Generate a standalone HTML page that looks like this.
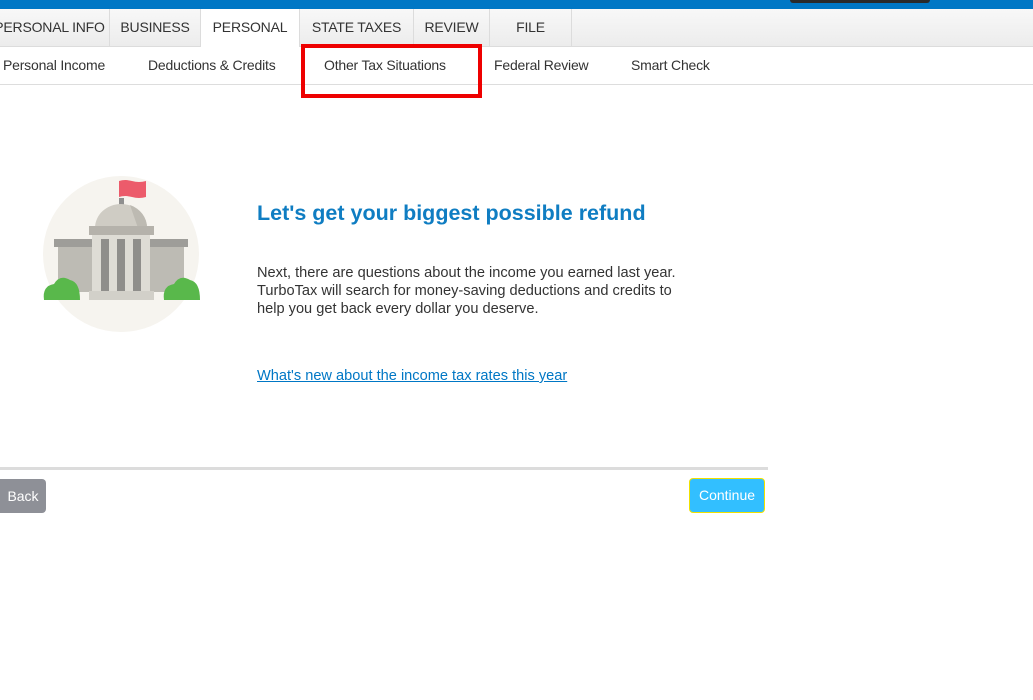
<!DOCTYPE html>
<html><head><style>
body{margin:0;width:1033px;height:700px;background:#fff;font-family:"Liberation Sans",sans-serif;position:relative;overflow:hidden}
.top{position:absolute;left:0;top:0;width:1033px;height:9px;background:#0077c5}
.dark{position:absolute;left:790px;top:0;width:140px;height:3px;background:#2a2a2a;border-radius:0 0 3px 3px}
.tabs{position:absolute;left:0;top:9px;width:1033px;height:37px;background:linear-gradient(#f8f8f8,#ececec);border-bottom:1px solid #dcdcdc}
.tab{position:absolute;top:0;height:37px;line-height:36px;font-size:14px;color:#333;text-align:center;border-right:1px solid #dcdcdc;box-sizing:border-box;letter-spacing:-0.2px}
.tab.act{background:#fff;height:38px}
.sub{position:absolute;top:46px;left:0;width:1033px;height:38px;border-bottom:1px solid #ddd}
.s{position:absolute;top:11px;font-size:14px;color:#333;letter-spacing:-0.2px}
.red{position:absolute;left:301px;top:44px;width:181px;height:54px;border:4px solid #e00;box-sizing:border-box}
h1{position:absolute;left:257px;top:201px;margin:0;font-size:21.5px;color:#0f7dc2;font-weight:bold}
.p{position:absolute;left:257px;top:264px;font-size:14.6px;line-height:18px;color:#333;width:440px}
a{position:absolute;left:257px;top:368px;font-size:14.6px;color:#0077c5;text-decoration:underline}
.hr{position:absolute;left:0;top:467px;width:768px;height:3px;background:#dcdcdc}
.back{position:absolute;left:0;top:479px;width:46px;height:34px;background:#8e9097;border-radius:0 4px 4px 0;color:#fff;font-size:14px;line-height:34px;text-align:center}
.cont{position:absolute;left:689px;top:478px;width:76px;height:35px;background:#32bfff;border:1px solid #f0e000;border-radius:4px;box-sizing:border-box;color:#fff;font-size:14px;line-height:33px;text-align:center}
</style></head><body>
<div class="top"></div><div class="dark"></div>
<div class="tabs">
<div class="tab" style="left:-10px;width:120px">PERSONAL INFO</div>
<div class="tab" style="left:110px;width:91px">BUSINESS</div>
<div class="tab act" style="left:201px;width:99px">PERSONAL</div>
<div class="tab" style="left:300px;width:114px">STATE TAXES</div>
<div class="tab" style="left:414px;width:76px">REVIEW</div>
<div class="tab" style="left:490px;width:82px">FILE</div>
</div>
<div class="sub">
<span class="s" style="left:3px">Personal Income</span>
<span class="s" style="left:148px">Deductions &amp; Credits</span>
<span class="s" style="left:324px">Other Tax Situations</span>
<span class="s" style="left:494px">Federal Review</span>
<span class="s" style="left:631px">Smart Check</span>
</div>
<div class="red"></div>
<svg style="position:absolute;left:30px;top:170px" width="180" height="170" viewBox="0 0 180 170">
<circle cx="91" cy="84" r="78" fill="#f6f4ef"/>
<rect x="89" y="28" width="5" height="12" fill="#8f8f8f"/>
<path d="M89 11 Q95 9 102 11 Q109 13 116 11 L116 27 Q109 29 102 27 Q95 25 89 27 Z" fill="#ec5b6b"/>
<path d="M65 58 A26 24 0 0 1 117 58 Z" fill="#cfccc4"/>
<path d="M100 35 A26 24 0 0 1 117 58 L108 58 Z" fill="#bdbab2"/>
<rect x="59" y="56" width="65" height="9" fill="#b5b2ab"/>
<rect x="24" y="69" width="134" height="8" fill="#9e9d99"/>
<rect x="28" y="77" width="34" height="45" fill="#bdbbb4"/>
<rect x="120" y="77" width="34" height="45" fill="#bdbbb4"/>
<rect x="62" y="65" width="58" height="58" fill="#dedcd5"/>
<rect x="71" y="69" width="8" height="52" fill="#8f8e8b"/>
<rect x="87" y="69" width="8" height="52" fill="#8f8e8b"/>
<rect x="103" y="69" width="8" height="52" fill="#8f8e8b"/>
<rect x="59" y="121" width="65" height="9" fill="#d2d0c9"/>
<path d="M14 130 Q12 116 24 114 Q30 104 40 110 Q50 112 50 130 Z" fill="#59b84b"/>
<path d="M134 130 Q132 116 144 114 Q150 104 160 110 Q170 112 170 130 Z" fill="#59b84b"/>
</svg>
<h1>Let's get your biggest possible refund</h1>
<div class="p">Next, there are questions about the income you earned last year. TurboTax will search for money-saving deductions and credits to help you get back every dollar you deserve.</div>
<a>What's new about the income tax rates this year</a>
<div class="hr"></div>
<div class="back">Back</div>
<div class="cont">Continue</div>
</body></html>
